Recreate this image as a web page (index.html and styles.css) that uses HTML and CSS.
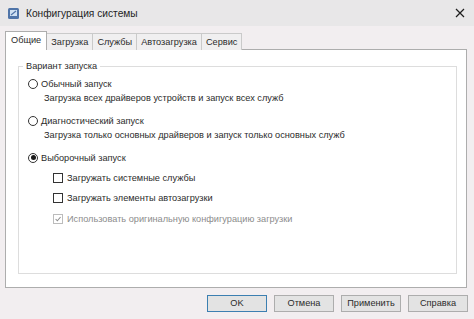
FILE: index.html
```html
<!DOCTYPE html>
<html lang="ru">
<head>
    <meta charset="UTF-8">
    <title>Конфигурация системы</title>
    <link rel="stylesheet" href="styles.css">
</head>
<body>
<div class="window">
    <div class="titlebar">
        <svg class="appicon" viewBox="0 0 11 11">
            <rect x="0" y="0" width="11" height="11" rx="1.5" fill="#4f74a8"/>
            <rect x="2" y="2" width="7" height="6" fill="#cfe0f2"/>
            <path d="M3 7 L8 3" stroke="#4f74a8" stroke-width="1.2"/>
        </svg>
        <span class="titletext">Конфигурация системы</span>
        <svg class="closeicon" viewBox="0 0 10 10">
            <path d="M1 1 L9 9 M9 1 L1 9" stroke="#1e1e1e" stroke-width="1.2"/>
        </svg>
    </div>

    <div class="dialogbody">
        <div class="tabs">
            <div class="tab tabactive">Общие</div>
            <div class="tab">Загрузка</div>
            <div class="tab">Службы</div>
            <div class="tab">Автозагрузка</div>
            <div class="tab">Сервис</div>
        </div>

        <div class="panel">
            <fieldset class="group">
                <legend>Вариант запуска</legend>

                <div class="radiorow firstrow"><span class="radio"></span>Обычный запуск</div>
                <div class="desc">Загрузка всех драйверов устройств и запуск всех служб</div>

                <div class="radiorow"><span class="radio"></span>Диагностический запуск</div>
                <div class="desc">Загрузка только основных драйверов и запуск только основных служб</div>

                <div class="radiorow"><span class="radio radiochecked"></span>Выборочный запуск</div>

                <div class="checkrow"><span class="checkbox"></span>Загружать системные службы</div>
                <div class="checkrow"><span class="checkbox"></span>Загружать элементы автозагрузки</div>
                <div class="checkrow checkdisabled">
                    <span class="checkbox">
                        <svg viewBox="0 0 10 10"><path d="M2 5 L4.2 7.3 L8.2 2.5" fill="none" stroke="#8d8d8d" stroke-width="1.3"/></svg>
                    </span>Использовать оригинальную конфигурацию загрузки
                </div>
            </fieldset>
        </div>

        <div class="buttons">
            <div class="btn btndefault">OK</div>
            <div class="btn">Отмена</div>
            <div class="btn">Применить</div>
            <div class="btn">Справка</div>
        </div>
    </div>
</div>
</body>
</html>
```

FILE: styles.css
```css
body{
    margin: 0;
    background: #f2eef0;
    font-family: "Liberation Sans", "Noto Sans", sans-serif;
    font-size: 9.2px;
    color: #2b2b2b;
}

.window{
    width: 474px;
    height: 319px;
    overflow: hidden;
}

.titlebar{
    height: 26px;
    background: #e8e7e8;
    display: flex;
    align-items: center;
    padding-left: 8px;
}

.appicon{
    width: 11px;
    height: 11px;
    margin-right: 7px;
}

.titletext{
    flex: 1;
    font-size: 10.2px;
    color: #1e1e1e;
}

.closeicon{
    width: 10px;
    height: 10px;
    margin-right: 9px;
}

.tabs{
    display: flex;
    align-items: flex-end;
    height: 19px;
    margin: 5px 0 -1px 6px;
}

.tab{
    height: 16px;
    line-height: 16px;
    padding: 0 4px;
    border: 1px solid #cacaca;
    border-bottom: none;
    background: #f0eff0;
    margin-left: -1px;
}

.tabactive{
    height: 18px;
    line-height: 17px;
    padding: 0 5px;
    background: #ffffff;
    border-color: #adadad;
    position: relative;
    z-index: 1;
}

.panel{
    box-sizing: border-box;
    width: 462px;
    height: 239px;
    margin-left: 5px;
    border: 1px solid #adadad;
    background: #ffffff;
    padding: 10px 9px 13px 12px;
    display: flex;
    flex-direction: column;
}

.group{
    flex: 1;
    margin: 0;
    padding: 0;
    border: 1px solid #dddddd;
    min-width: 0;
}

.group legend{
    margin-left: 4px;
    padding: 0 3px;
    line-height: 12px;
}

.radiorow{
    display: flex;
    align-items: center;
    height: 15px;
    padding-left: 9px;
    margin-top: 7px;
}

.firstrow{
    margin-top: 4px;
}

.radio{
    box-sizing: border-box;
    width: 10px;
    height: 10px;
    border: 1px solid #333333;
    border-radius: 50%;
    background: #ffffff;
    margin-right: 3px;
    display: flex;
    align-items: center;
    justify-content: center;
}

.radiochecked::after{
    content: "";
    width: 5px;
    height: 5px;
    border-radius: 50%;
    background: #1a1a1a;
}

.desc{
    height: 15px;
    line-height: 15px;
    padding-left: 25px;
}

.checkrow{
    display: flex;
    align-items: center;
    height: 15px;
    padding-left: 34px;
    margin-top: 5px;
}

.checkrow:first-of-type{
    margin-top: 6px;
}

.checkbox{
    box-sizing: border-box;
    width: 10px;
    height: 10px;
    border: 1px solid #333333;
    background: #ffffff;
    margin-right: 4px;
    display: flex;
}

.checkbox svg{
    width: 8px;
    height: 8px;
}

.checkdisabled{
    color: #8c8c8c;
    margin-top: 6px;
}

.checkdisabled .checkbox{
    border-color: #bcbcbc;
}

.buttons{
    display: flex;
    justify-content: flex-end;
    gap: 7px;
    margin-top: 7px;
    padding-right: 6px;
}

.btn{
    box-sizing: border-box;
    width: 60px;
    height: 17px;
    line-height: 15px;
    text-align: center;
    border: 1px solid #adadad;
    background: #e3e3e3;
}

.btndefault{
    border-color: #3c7fb1;
}
```
